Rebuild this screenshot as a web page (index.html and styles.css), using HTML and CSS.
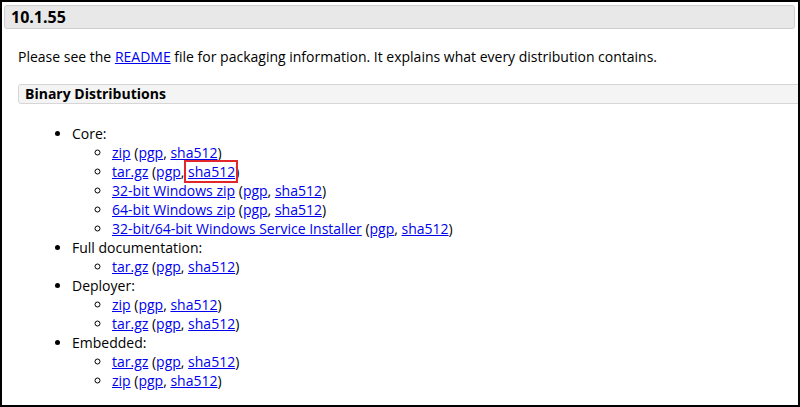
FILE: index.html
```html
<!DOCTYPE html>
<html lang="en">
<head>
    <meta charset="UTF-8">
    <title>Tomcat 10.1.55 Downloads</title>
    <link rel="stylesheet" href="styles.css">
</head>
<body>
    <div class="frame">
        <h2 class="version">10.1.55</h2>
        <div class="section-body">
            <p>Please see the <a href="#">README</a> file for packaging information. It explains what every distribution contains.</p>

            <h3 class="subsection">Binary Distributions</h3>

            <ul class="dist-list">
                <li>Core:
                    <ul>
                        <li><a href="#">zip</a> (<a href="#">pgp</a>, <a href="#">sha512</a>)</li>
                        <li><a href="#">tar.gz</a> (<a href="#">pgp</a>, <span class="highlight"><a href="#">sha512</a></span>)</li>
                        <li><a href="#">32-bit Windows zip</a> (<a href="#">pgp</a>, <a href="#">sha512</a>)</li>
                        <li><a href="#">64-bit Windows zip</a> (<a href="#">pgp</a>, <a href="#">sha512</a>)</li>
                        <li><a href="#">32-bit/64-bit Windows Service Installer</a> (<a href="#">pgp</a>, <a href="#">sha512</a>)</li>
                    </ul>
                </li>
                <li>Full documentation:
                    <ul>
                        <li><a href="#">tar.gz</a> (<a href="#">pgp</a>, <a href="#">sha512</a>)</li>
                    </ul>
                </li>
                <li>Deployer:
                    <ul>
                        <li><a href="#">zip</a> (<a href="#">pgp</a>, <a href="#">sha512</a>)</li>
                        <li><a href="#">tar.gz</a> (<a href="#">pgp</a>, <a href="#">sha512</a>)</li>
                    </ul>
                </li>
                <li>Embedded:
                    <ul>
                        <li><a href="#">tar.gz</a> (<a href="#">pgp</a>, <a href="#">sha512</a>)</li>
                        <li><a href="#">zip</a> (<a href="#">pgp</a>, <a href="#">sha512</a>)</li>
                    </ul>
                </li>
            </ul>
        </div>
    </div>
</body>
</html>
```

FILE: styles.css
```css
* {
    margin: 0;
    padding: 0;
    box-sizing: border-box;
}

body {
    font-family: "Open Sans", "DejaVu Sans", sans-serif;
    font-size: 14px;
    line-height: 19px;
    color: #000;
    background: white;
}

.frame {
    height: 407px;
    border: 2px solid #000;
    padding: 3px 0 0 2px;
    overflow: hidden;
}

.version {
    margin-right: 3px;
    height: 24px;
    padding: 0 6px;
    background: #e8e8e8;
    border: 1px solid #cfcfcf;
    border-radius: 3px;
    font-size: 16px;
    font-weight: 700;
    line-height: 22px;
}

.section-body {
    padding-left: 14px;
}

.section-body p {
    margin-top: 18px;
}

a {
    color: #0000ee;
}

.subsection {
    margin: 18px -20px 0 0;
    height: 20px;
    padding: 0 6px;
    background: #f4f4f4;
    border: 1px solid #d6d6d6;
    border-radius: 3px;
    font-size: 14px;
    font-weight: 700;
    line-height: 18px;
}

.dist-list {
    margin-top: 20px;
    padding-left: 54px;
}

.dist-list ul {
    padding-left: 40px;
    list-style-type: circle;
}

.highlight {
    outline: 2px solid #e2262c;
    outline-offset: 0;
    padding: 0 1px 0 2px;
    margin: 0 -1px 0 -2px;
}
```
